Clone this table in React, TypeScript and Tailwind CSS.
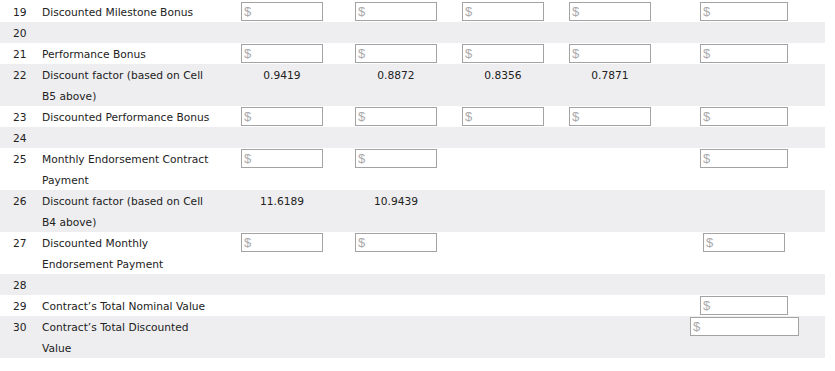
import React from "react";

type Cell =
  | null
  | { kind: "input"; ml?: string; w?: string }
  | { kind: "value"; text: string };

type Row = {
  num: number;
  label: string;
  cells: Cell[];
  tall?: boolean;
};

const inp = (ml = "ml-0", w = "w-[82px]"): Cell => ({ kind: "input", ml, w });
const val = (text: string): Cell => ({ kind: "value", text });
const lastInp = inp("ml-[10px]", "w-[88px]");

const ROWS: Row[] = [
  { num: 19, label: "Discounted Milestone Bonus", cells: [inp(), inp(), inp(), inp(), lastInp] },
  { num: 20, label: "", cells: [null, null, null, null, null] },
  { num: 21, label: "Performance Bonus", cells: [inp(), inp(), inp(), inp(), lastInp] },
  {
    num: 22,
    label: "Discount factor (based on Cell B5 above)",
    cells: [val("0.9419"), val("0.8872"), val("0.8356"), val("0.7871"), null],
    tall: true,
  },
  { num: 23, label: "Discounted Performance Bonus", cells: [inp(), inp(), inp(), inp(), lastInp] },
  { num: 24, label: "", cells: [null, null, null, null, null] },
  {
    num: 25,
    label: "Monthly Endorsement Contract Payment",
    cells: [inp(), inp(), null, null, lastInp],
    tall: true,
  },
  {
    num: 26,
    label: "Discount factor (based on Cell B4 above)",
    cells: [val("11.6189"), val("10.9439"), null, null, null],
    tall: true,
  },
  {
    num: 27,
    label: "Discounted Monthly Endorsement Payment",
    cells: [inp(), inp(), null, null, inp("ml-[13px]", "w-[82px]")],
    tall: true,
  },
  { num: 28, label: "", cells: [null, null, null, null, null] },
  { num: 29, label: "Contract’s Total Nominal Value", cells: [null, null, null, null, lastInp] },
  {
    num: 30,
    label: "Contract’s Total Discounted Value",
    cells: [null, null, null, null, inp("ml-0", "w-[109px]")],
    tall: true,
  },
];

function MoneyInput({ ml, w }: { ml?: string; w?: string }) {
  return (
    <input
      type="text"
      placeholder="$"
      className={`${ml} ${w} mt-px block h-[19px] border border-[#a3a3a3] bg-white px-[2px] text-[13px] leading-[17px] text-[#333] outline-none placeholder:text-[#ababab]`}
      style={{ fontFamily: '"Liberation Sans", Arial, sans-serif' }}
    />
  );
}

function DataCell({ cell }: { cell: Cell }) {
  if (!cell) return <div />;
  if (cell.kind === "value") {
    return <div className="w-[82px] translate-y-px text-center">{cell.text}</div>;
  }
  return (
    <div>
      <MoneyInput ml={cell.ml} w={cell.w} />
    </div>
  );
}

export default function App() {
  return (
    <div
      className="min-h-[371px] bg-white pt-px text-[10.67px] leading-[21px] text-[#222]"
      style={{ fontFamily: '"DejaVu Sans", Verdana, sans-serif' }}
    >
      <div className="w-[825px]">
        {ROWS.map((row, i) => (
          <div
            key={row.num}
            className={`grid grid-cols-[42px_199px_114px_107px_107px_121px_1fr] ${
              row.tall ? "min-h-[42px]" : "min-h-[21px]"
            } ${i % 2 === 1 ? "bg-[#eeeef0]" : "bg-white"}`}
          >
            <div className="translate-y-px pl-[13px]">{row.num}</div>
            <div className="translate-y-px pr-[22px]">{row.label}</div>
            {row.cells.map((cell, j) => (
              <DataCell key={j} cell={cell} />
            ))}
          </div>
        ))}
      </div>
    </div>
  );
}
